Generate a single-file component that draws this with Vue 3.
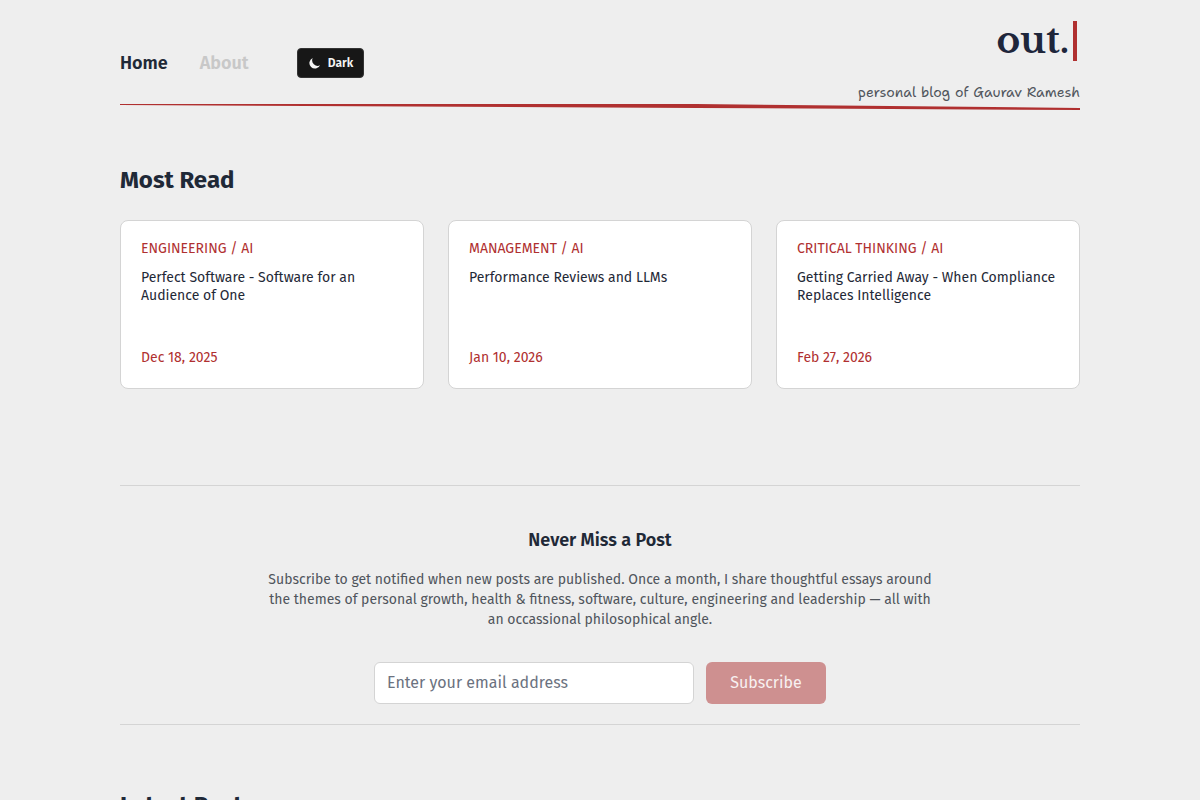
<script setup>
import { ref } from 'vue'

const email = ref('')
const posts = [
  { topic: 'Engineering / AI', title: 'Perfect Software - Software for an Audience of One', date: 'Dec 18, 2025' },
  { topic: 'Management / AI', title: 'Performance Reviews and LLMs', date: 'Jan 10, 2026' },
  { topic: 'Critical Thinking / AI', title: 'Getting Carried Away - When Compliance Replaces Intelligence', date: 'Feb 27, 2026' },
]
</script>

<template>
  <div class="page">
    <header class="header">
      <nav class="nav" aria-label="Main">
        <a class="link active" href="#home">Home</a>
        <a class="link" href="#about">About</a>
        <button class="theme" type="button">
          <svg class="moon" viewBox="0 0 20 20" aria-hidden="true">
            <path d="M17.293 13.293A8 8 0 016.707 2.707a8.001 8.001 0 1010.586 10.586z" fill="currentColor" />
          </svg>
          Dark
        </button>
      </nav>
      <div class="brand">
        <a class="logo" href="#home">out.<span class="cursor"></span></a>
        <p class="tagline">personal blog of Gaurav Ramesh</p>
      </div>
    </header>
    <svg class="rule" viewBox="0 0 960 6" preserveAspectRatio="none" aria-hidden="true">
      <polygon points="0,0 576,0 960,4 960,6 576,4 0,1" fill="#b03030" />
    </svg>

    <main>
      <h2 class="heading">Most Read</h2>
      <div class="cards">
        <a v-for="post in posts" :key="post.title" class="card" href="#post">
          <span class="topic">{{ post.topic }}</span>
          <h3 class="title">{{ post.title }}</h3>
          <time class="date">{{ post.date }}</time>
        </a>
      </div>

      <section class="newsletter">
        <h3 class="news-title">Never Miss a Post</h3>
        <p class="news-text">
          Subscribe to get notified when new posts are published. Once a month, I share thoughtful essays around
          the themes of personal growth, health &amp; fitness, software, culture, engineering and leadership — all with
          an occassional philosophical angle.
        </p>
        <form class="form" @submit.prevent>
          <input v-model="email" class="email" type="email" aria-label="Email address" placeholder="Enter your email address" />
          <button class="subscribe" type="submit" :disabled="!email">Subscribe</button>
        </form>
      </section>

      <h2 class="heading latest">Latest Posts</h2>
    </main>
  </div>
</template>

<style>
html {
  background: #eeeeee;
}
body {
  overflow: hidden;
}
#app {
  height: 100vh;
  overflow: hidden;
}
</style>

<style scoped>
.page {
  box-sizing: border-box;
  max-width: 1008px;
  margin: 0 auto;
  padding: 0 24px;
  color: #1f2937;
  font-family: "Fira Sans", "Noto Sans", sans-serif;
  font-size: 14px;
  line-height: 20px;
}
h2,
h3,
p {
  margin: 0;
}
a {
  color: inherit;
  text-decoration: none;
}
button,
input {
  font-family: inherit;
}
.header {
  display: flex;
  justify-content: space-between;
  padding-top: 16px;
}
.nav {
  display: flex;
  align-items: center;
  gap: 32px;
  padding-top: 6px;
}
.link {
  color: #c8c8c8;
  font-size: 18px;
  font-weight: 600;
  line-height: 28px;
}
.link.active {
  color: #1f2937;
}
.theme {
  display: flex;
  align-items: center;
  gap: 6px;
  height: 30px;
  margin-left: 16px;
  padding: 0 10px;
  border: 1px solid #333333;
  border-radius: 4px;
  background: #171717;
  color: #f5f5f5;
  font-size: 12px;
  font-weight: 600;
}
.moon {
  width: 14px;
  height: 14px;
}
.brand {
  text-align: right;
}
.logo {
  display: flex;
  align-items: center;
  justify-content: flex-end;
  gap: 4px;
  height: 50px;
  padding-right: 3px;
  color: #1e263b;
  font-family: "Libre Baskerville", Lora, "Liberation Serif", serif;
  font-size: 36px;
  font-weight: 700;
}
.cursor {
  width: 4px;
  height: 40px;
  background: #b03030;
}
.tagline {
  padding: 16px 0 2px;
  color: #50555c;
  font-family: "Shantell Sans", "Playpen Sans", cursive;
  font-size: 14px;
}
.rule {
  display: block;
  width: 100%;
  height: 6px;
}
.heading {
  margin: 54px 0 24px;
  font-size: 24px;
  font-weight: 700;
  line-height: 32px;
}
.cards {
  display: grid;
  grid-template-columns: repeat(3, minmax(0, 1fr));
  gap: 24px;
}
.card {
  display: flex;
  flex-direction: column;
  box-sizing: border-box;
  min-height: 169px;
  padding: 18px 20px 20px;
  border: 1px solid #d4d4d4;
  border-radius: 8px;
  background: #ffffff;
}
.topic {
  color: #b03030;
  text-transform: uppercase;
}
.title {
  margin-top: 10px;
  font-size: 14px;
  font-weight: 400;
  line-height: 18px;
}
.date {
  margin-top: auto;
  color: #b03030;
}
.newsletter {
  display: flex;
  flex-direction: column;
  align-items: center;
  margin-top: 96px;
  padding: 40px 0 20px;
  border-top: 1px solid #d4d4d4;
  border-bottom: 1px solid #d4d4d4;
  text-align: center;
}
.news-title {
  font-size: 18px;
  font-weight: 600;
  line-height: 28px;
}
.news-text {
  max-width: 672px;
  margin-top: 16px;
  color: #50555c;
}
.form {
  display: flex;
  gap: 12px;
  margin-top: 32px;
}
.email {
  box-sizing: border-box;
  width: 320px;
  height: 42px;
  padding: 0 12px 2px;
  border: 1px solid #d4d4d4;
  border-radius: 6px;
  background: #ffffff;
  font-size: 16px;
}
.email::placeholder {
  color: #6b7280;
}
.subscribe {
  width: 120px;
  padding: 0 0 2px;
  border: 0;
  border-radius: 6px;
  background: #ce9090;
  color: #f8f1f1;
  font-size: 16px;
}
.latest {
  margin-top: 64px;
}
</style>
